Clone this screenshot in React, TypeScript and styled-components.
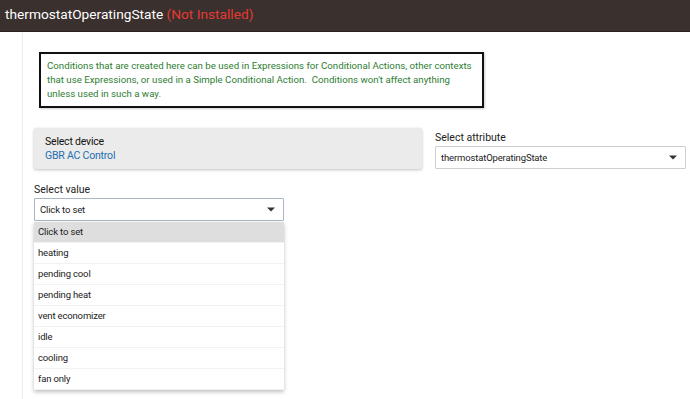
import styled, { createGlobalStyle } from 'styled-components'

const GlobalStyle = createGlobalStyle`
    html, body {
        margin: 0;
        padding: 0;
        background: #fff;
        font-family: Roboto, "Liberation Sans", sans-serif;
    }
`

const options = ['Click to set', 'heating', 'pending cool', 'pending heat', 'vent economizer', 'idle', 'cooling', 'fan only']

const Caret = () => (
    <svg width="8" height="5" viewBox="0 0 8 5">
        <path d="M0 0.5 H8 L4 4.5 Z" fill="#333" />
    </svg>
)

const App = () => {
    return (
        <Page>
            <GlobalStyle />
            <Header>
                thermostatOperatingState <NotInstalled>(Not Installed)</NotInstalled>
            </Header>
            <Body>
                <Gutter />
                <Content>
                    <InfoBox>
                        <div>Conditions that are created here can be used in Expressions for Conditional Actions, other contexts</div>
                        <div>that use Expressions, or used in a Simple Conditional Action.&nbsp; Conditions won't affect anything</div>
                        <div>unless used in such a way.</div>
                    </InfoBox>
                    <DeviceRow>
                        <DeviceCard>
                            <CardTitle>Select device</CardTitle>
                            <DeviceName>GBR AC Control</DeviceName>
                        </DeviceCard>
                        <Field $width={251}>
                            <Label>Select attribute</Label>
                            <SelectBox>
                                <span>thermostatOperatingState</span>
                                <Caret />
                            </SelectBox>
                        </Field>
                    </DeviceRow>
                    <ValueField $width={250}>
                        <Label>Select value</Label>
                        <SelectBox $focused>
                            <span>Click to set</span>
                            <Caret />
                        </SelectBox>
                        <Menu>
                            {options.map((o, i) => (
                                <MenuItem key={o} $selected={i === 0}>{o}</MenuItem>
                            ))}
                        </Menu>
                    </ValueField>
                </Content>
            </Body>
        </Page>
    )
}

export default App

const Page = styled.div`
    width: 690px;
    height: 399px;
    overflow: hidden;
    display: flex;
    flex-direction: column;
`

const Header = styled.div`
    height: 32px;
    flex-shrink: 0;
    background: #3a302d;
    border-bottom: 1px solid #2a2220;
    color: #fff;
    font-size: 13.7px;
    line-height: 28px;
    padding-left: 5px;
    box-sizing: border-box;
`

const NotInstalled = styled.span`
    color: #e53935;
`

const Body = styled.div`
    flex: 1;
    display: flex;
`

const Gutter = styled.div`
    width: 22px;
    flex-shrink: 0;
    border-right: 1px solid #ececec;
`

const Content = styled.div`
    flex: 1;
    padding: 20px 5px 0 11px;
    display: flex;
    flex-direction: column;
`

const InfoBox = styled.div`
    width: 445px;
    box-sizing: border-box;
    margin-left: 5px;
    border: 2px solid #111;
    padding: 5px 6px 5px 6px;
    color: #2e7d32;
    font-size: 9.7px;
    line-height: 14px;
    white-space: nowrap;
    box-shadow: 1px 1px 2px rgba(0, 0, 0, 0.2);
`

const DeviceRow = styled.div`
    display: flex;
    align-items: flex-start;
    gap: 13px;
    margin-top: 20px;
`

const DeviceCard = styled.div`
    width: 388px;
    height: 41px;
    box-sizing: border-box;
    background: #ebebeb;
    border-radius: 2px;
    box-shadow: 0 1px 3px rgba(0, 0, 0, 0.25);
    padding: 7px 11px;
    font-size: 10.5px;
    letter-spacing: -0.2px;
    line-height: 14px;
`

const CardTitle = styled.div`
    color: #111;
`

const DeviceName = styled.div`
    color: #1e6fb0;
`

const Field = styled.div<{ $width: number }>`
    width: ${p => p.$width}px;
    display: flex;
    flex-direction: column;
    margin-top: 3px;
`

const ValueField = styled(Field)`
    margin-top: 14px;
`

const Label = styled.div`
    font-size: 10.5px;
    line-height: 14px;
    color: #222;
    margin-bottom: 1px;
`

const SelectBox = styled.div<{ $focused?: boolean }>`
    height: 23px;
    box-sizing: border-box;
    border: 1px solid ${p => p.$focused ? '#a9b6c8' : '#cfcfcf'};
    border-radius: 1px;
    display: flex;
    align-items: center;
    justify-content: space-between;
    padding: 0 8px 0 5px;
    font-size: 9.5px;
    letter-spacing: -0.15px;
    color: #222;
    background: #fff;
`

const Menu = styled.div`
    box-shadow: 0 2px 4px rgba(0, 0, 0, 0.25);
    background: #fff;
    margin-top: 1px;
`

const MenuItem = styled.div<{ $selected?: boolean }>`
    height: 21px;
    box-sizing: border-box;
    line-height: 20px;
    padding-left: 4px;
    font-size: 9.5px;
    letter-spacing: -0.15px;
    color: #222;
    background: ${p => p.$selected ? '#dedede' : '#fff'};
    border-bottom: 1px solid #f2f2f2;
`
